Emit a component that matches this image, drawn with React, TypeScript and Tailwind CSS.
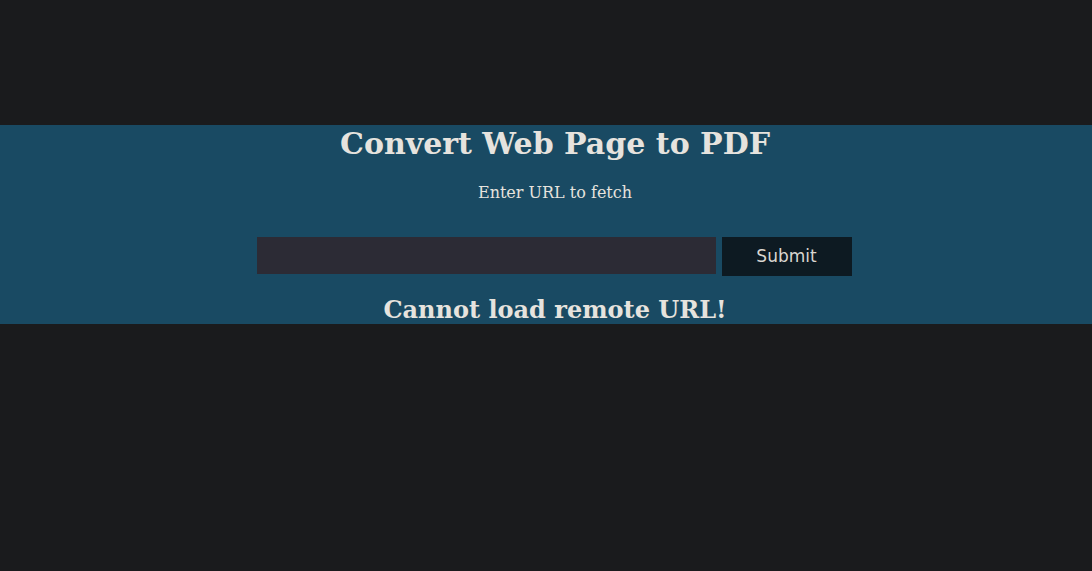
export default function App() {
  return (
    <div className="min-h-screen w-full bg-[#1a1b1d] pt-[125px] font-['DejaVu_Serif',serif] text-[#e6e3de]">
      <div className="flex h-[199px] w-full flex-col items-center bg-[#194a63] pl-[18px]">
        <h1 className="text-[30px] font-bold leading-[38px]">Convert Web Page to PDF</h1>
        <p className="mt-[20px] text-[16px] leading-[20px]">Enter URL to fetch</p>
        <form className="mt-[34px] mr-[2px] flex items-start gap-[6px]" onSubmit={(e) => e.preventDefault()}>
          <input
            type="text"
            className="h-[37px] w-[459px] bg-[#2c2b35] px-2 text-[16px] text-[#e6e3de] outline-none"
          />
          <button
            type="submit"
            className="h-[39px] w-[130px] bg-[#0d1a22] font-['DejaVu_Sans',sans-serif] text-[17px] text-[#d9d6d0]"
          >
            Submit
          </button>
        </form>
        <h2 className="mt-[19px] text-[24px] font-bold leading-[30px]">Cannot load remote URL!</h2>
      </div>
    </div>
  );
}
